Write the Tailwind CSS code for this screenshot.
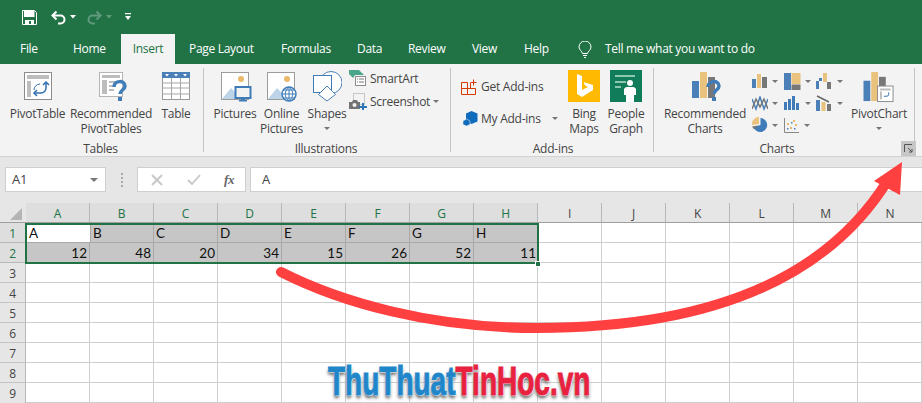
<!DOCTYPE html>
<html lang="en"><head><meta charset="utf-8"><title>Excel Insert ribbon</title>
<script src="https://cdn.jsdelivr.net/npm/@tailwindcss/browser@4"></script></head>
<body class="bg-white">
<div class="relative w-[922px] h-[403px] overflow-hidden font-['Open_Sans',sans-serif] text-[12px] leading-[15px] text-[#444] tracking-[-0.25px]">

<!-- Quick access -->
<div class="h-[34px] bg-[#217346] flex items-center pl-[22px]">
  <svg width="15" height="15" viewBox="0 0 15 15"><path d="M0.500 0.500h12l2 2v12h-14z" fill="none" stroke="#fff"/><rect x="2" y="1" width="10.500" height="6" fill="#fff"/><rect x="3" y="10" width="9" height="4.500" fill="#fff"/><rect x="7" y="11" width="2" height="3" fill="#217346"/></svg>
  <svg class="ml-[14px]" width="15" height="15" viewBox="0 0 15 15"><path d="M1.500 5.500h8a4 4 0 0 1 0 8H7" fill="none" stroke="#fff" stroke-width="2"/><path d="M5.500 1.500l-4 4 4 4" fill="none" stroke="#fff" stroke-width="2"/></svg>
  <svg class="ml-[4px]" width="6" height="4" viewBox="0 0 6 4"><path d="M0 0h6L3 3.500z" fill="#fff"/></svg>
  <svg class="ml-[11px]" width="15" height="15" viewBox="0 0 15 15"><path d="M13.500 5.500h-8a4 4 0 0 0 0 8H8" fill="none" stroke="#5f9a7c" stroke-width="2"/><path d="M9.500 1.500l4 4-4 4" fill="none" stroke="#5f9a7c" stroke-width="2"/></svg>
  <svg class="ml-[4px]" width="6" height="4" viewBox="0 0 6 4"><path d="M0 0h6L3 3.500z" fill="#5f9a7c"/></svg>
  <svg class="ml-[13px]" width="6" height="8" viewBox="0 0 6 8"><path d="M0 0h6v1.200H0zM0 3h6L3 7z" fill="#fff"/></svg>
</div>

<!-- Tabs -->
<div class="h-[30px] bg-[#217346] flex text-white text-[12px] tracking-[-0.3px] leading-[30px]">
  <div class="ml-[20px] w-[53px]">File</div>
  <div class="w-[48px]">Home</div>
  <div class="w-[54px] bg-[#f3f3f3] text-[#217346] text-center">Insert</div>
  <div class="ml-[14px] w-[92px]">Page Layout</div>
  <div class="w-[76px]">Formulas</div>
  <div class="w-[51px]">Data</div>
  <div class="w-[64px]">Review</div>
  <div class="w-[52px]">View</div>
  <div class="w-[54px]">Help</div>
  <svg class="mt-[7px]" width="14" height="17" viewBox="0 0 14 17"><path d="M4.500 12.500C4 10 1 9 1 6a6 6 0 0 1 12 0c0 3-3 4-3.500 6.500zM5 14.500h4M6 16.500h2" fill="none" stroke="#fff"/></svg>
  <div class="ml-[13px]">Tell me what you want to do</div>
</div>

<!-- Ribbon -->
<div class="h-[93px] bg-[#f3f3f3] border-b border-[#d2d2d2] flex pt-[4px] relative">
  <!-- Tables -->
  <div class="w-[204px] h-[84px] border-r border-[#c4c4c4] flex flex-col">
    <div class="h-[73px] shrink-0 flex pl-[5px] pt-[4px]">
      <div class="w-[65px] flex flex-col items-center">
        <svg width="28" height="28" viewBox="0 0 28 28"><rect x="0.500" y="0.500" width="27" height="27" fill="#fff" stroke="#8c8c8c"/><path d="M3 3h22v4H3zM3 9h4v16H3z" fill="#bdbdbd"/><path d="M22 11v5a5 5 0 0 1-5 5h-6" fill="none" stroke="#2f6fb0" stroke-width="1.500"/><path d="M19 13l3-3 3 3M13 18l-3 3 3 3" fill="none" stroke="#2f6fb0" stroke-width="1.500"/><path d="M10 18a6 6 0 0 1 6-6" fill="none" stroke="#2f6fb0"/></svg>
        <div class="mt-[6px]">PivotTable</div>
      </div>
      <div class="w-[82px] flex flex-col items-center">
        <svg class="translate-x-[3px]" width="30" height="30" viewBox="0 0 30 30"><rect x="0.500" y="0.500" width="23" height="24" fill="#fff" stroke="#b5b5b5"/><path d="M3 3h18v3H3zM3 8h5v14H3zM10 9h10v2H10zM10 13h6v2H10zM10 17h5v2H10z" fill="#bdbdbd"/><path d="M15 15c0-7 11-7 11-1 0 4-5 4-5 8" fill="none" stroke="#3f7cb8" stroke-width="3.500"/><rect x="19" y="25" width="4" height="4" fill="#3f7cb8"/></svg>
        <div class="mt-[4px] text-center">Recommended PivotTables</div>
      </div>
      <div class="w-[48px] flex flex-col items-center">
        <svg width="28" height="28" viewBox="0 0 28 28"><rect x="0.500" y="0.500" width="27" height="27" fill="#fff" stroke="#9a9a9a"/><rect width="28" height="6" fill="#4a7fb8"/><path d="M3 2h4L5 4.500zM12 2h4l-2 2.500zM21 2h4l-2 2.500z" fill="#fff"/><path d="M0 11h28M0 16h28M0 22h28M9.500 6v22M18.500 6v22" stroke="#a6a6a6"/></svg>
        <div class="mt-[6px]">Table</div>
      </div>
    </div>
    <div class="text-center h-[15px] shrink-0 pr-[2px]">Tables</div>
  </div>
  <!-- Illustrations -->
  <div class="w-[247px] h-[84px] border-r border-[#c4c4c4] flex flex-col">
    <div class="h-[73px] shrink-0 flex pl-[9px] pt-[4px]">
      <div class="w-[44px] flex flex-col items-center">
        <svg class="translate-x-[1px]" width="31" height="30" viewBox="0 0 31 30"><rect x="0.500" y="0.500" width="27" height="27" fill="#fff" stroke="#9c9c9c"/><circle cx="20" cy="7" r="3" fill="#e9b96c"/><path d="M1 27l9-11 5 5 3-2 4 8z" fill="#bdd3e8"/><rect x="14.500" y="15" width="15" height="11" fill="#f3f3f3" stroke="#3f7cb8" stroke-width="2"/><path d="M20 27h4v1h2v1.500h-8V28h2z" fill="#3f7cb8"/></svg>
        <div class="mt-[4px]">Pictures</div>
      </div>
      <div class="w-[49px] flex flex-col items-center">
        <svg class="translate-x-[1px]" width="31" height="30" viewBox="0 0 31 30"><rect x="0.500" y="0.500" width="27" height="27" fill="#fff" stroke="#9c9c9c"/><circle cx="20" cy="7" r="3" fill="#e9b96c"/><path d="M1 27l9-11 5 5 3-2 4 8z" fill="#bdd3e8"/><circle cx="22" cy="22" r="7" fill="#fff" stroke="#3f7cb8" stroke-width="1.500"/><path d="M15 22h14M22 15v14M16.500 18h11M16.500 26h11M22 15c-5 4-5 10 0 14M22 15c5 4 5 10 0 14" fill="none" stroke="#3f7cb8"/></svg>
        <div class="mt-[4px] text-center">Online Pictures</div>
      </div>
      <div class="w-[42px] flex flex-col items-center">
        <svg class="-translate-x-[1px] -mt-[1px]" width="31" height="31" viewBox="0 0 31 31"><circle cx="20" cy="11.500" r="11" fill="#fff" stroke="#4a80b8"/><rect x="2.500" y="4.500" width="18" height="17" fill="#fff" stroke="#3f7cb8"/><path d="M16 15l8.500 8.500L16 30l-8.500-6.500z" fill="#fff" stroke="#4a80b8"/></svg>
        <div class="mt-[4px]">Shapes</div>
        <svg class="mt-[6px]" width="6" height="3" viewBox="0 0 6 3"><path d="M0 0h6L3 3z" fill="#777"/></svg>
      </div>
      <div class="ml-[1px] flex flex-col gap-[6px] -mt-[2px]">
        <div class="flex items-center gap-[3px] h-[17px]">
          <svg width="18" height="17" viewBox="0 0 18 17"><path d="M0 0h10l5 5H6L4 8 0 4z" fill="#4aa58a"/><rect x="6.500" y="6.500" width="10" height="9" fill="#fff" stroke="#8c8c8c"/><path d="M8 9h1M10 9h5M8 12h1M10 12h5" stroke="#777"/></svg><span>SmartArt</span>
        </div>
        <div class="flex items-center gap-[3px] h-[17px]">
          <svg width="18" height="17" viewBox="0 0 18 17"><rect x="4.500" y="0.500" width="11" height="11" fill="none" stroke="#999" stroke-dasharray="1 1"/><path d="M0 9h3l1-2h4l1 2h2v7H0z" fill="#737373"/><circle cx="5.500" cy="12" r="2" fill="#f3f3f3"/><path d="M13 10h2v3h3v2h-3v2h-2v-2h-3v-2h3z" fill="#2f74b5"/></svg><span>Screenshot</span>
          <svg width="6" height="3" viewBox="0 0 6 3"><path d="M0 0h6L3 3z" fill="#777"/></svg>
        </div>
      </div>
    </div>
    <div class="text-center h-[15px] shrink-0 pr-[2px]">Illustrations</div>
  </div>
  <!-- Add-ins -->
  <div class="w-[203px] h-[84px] border-r border-[#c4c4c4] flex flex-col">
    <div class="h-[73px] shrink-0 flex pl-[10px] pt-[2px]">
      <div class="w-[102px] flex flex-col pt-[8px] gap-[15px]">
        <div class="flex items-center gap-[4px] h-[17px]">
          <svg width="16" height="16" viewBox="0 0 16 16"><path d="M0.500 3.500h6v6h-6zM6.500 9.500h8v6h-8zM0.500 9.500h6v6h-6zM9.500 4v5" fill="none" stroke="#d83b01"/><path d="M9.500 3.500h6M12.500 0.500v6" stroke="#d83b01"/></svg><span>Get Add-ins</span>
        </div>
        <div class="flex items-center h-[17px] pl-[2px]">
          <svg width="15" height="15" viewBox="0 0 15 15"><path d="M8.500 0l6 2.500v8L8.500 13 3 10.500v-8z" fill="#0f6cbd"/><path d="M3.500 8l3.500 2v3.500L3.500 15 0 13.500V10z" fill="#0f6cbd" stroke="#f3f3f3" stroke-width="0.500"/></svg><span class="ml-[3px]">My Add-ins</span>
          <svg class="ml-[11px]" width="6" height="3" viewBox="0 0 6 3"><path d="M0 0h6L3 3z" fill="#777"/></svg>
        </div>
      </div>
      <div class="w-[42px] flex flex-col items-center">
        <div class="w-[32px] h-[32px] bg-[#ffb900] flex items-center justify-center">
          <svg width="19" height="24" viewBox="0 0 19 24"><path d="M2 0l5 2v14l6-3-3-1.500L8.500 8 18 11v5L7 23l-5-3z" fill="#fff"/></svg>
        </div>
        <div class="mt-[4px] text-center">Bing Maps</div>
      </div>
      <div class="w-[42px] flex flex-col items-center">
        <div class="w-[32px] h-[32px] bg-[#107c5a] flex justify-center items-end">
          <svg width="32" height="32" viewBox="0 0 32 32"><path d="M5 5h20v2H5zM5 11h11v2H5zM5 16h6v2H5z" fill="#8fc7b0"/><circle cx="20" cy="13" r="3" fill="#fff"/><path d="M14 19q1-2 3-2h6q2 0 3 2v6h-2v7h-8v-7h-2z" fill="#fff"/></svg>
        </div>
        <div class="mt-[4px] text-center">People Graph</div>
      </div>
    </div>
    <div class="text-center h-[15px] shrink-0 pl-[2px]">Add-ins</div>
  </div>
  <!-- Charts -->
  <div class="w-[261px] h-[84px] border-r border-[#c4c4c4] flex flex-col">
    <div class="h-[73px] shrink-0 flex pl-[9px]">
      <div class="w-[84px] pt-[4px] flex flex-col items-center">
        <svg class="translate-x-[2px]" width="30" height="31" viewBox="0 0 30 31"><rect x="0" y="9" width="7" height="17" fill="#4a7fb8"/><rect x="8" y="0" width="7" height="26" fill="#e9c27d"/><rect x="16" y="5" width="7" height="21" fill="#777"/><path d="M16 15c0-7 11-7 11-1 0 4-5 4-5 8" fill="none" stroke="#3f7cb8" stroke-width="3.500"/><rect x="20" y="25" width="4" height="4" fill="#3f7cb8"/></svg>
        <div class="mt-[3px] text-center">Recommended Charts</div>
      </div>
      <div class="w-[99px] pl-[5px] pt-[2px] grid grid-cols-[32px_32px_33px] grid-rows-[22px_22px_22px]">
        <div class="flex items-center"><svg width="16" height="14" viewBox="0 0 16 14"><rect y="5" width="4" height="9" fill="#4a7fb8"/><rect x="5" width="4" height="14" fill="#e9c27d"/><rect x="10" y="3" width="5" height="11" fill="#777"/></svg><svg class="ml-[4px]" width="6" height="3" viewBox="0 0 6 3"><path d="M0 0h6L3 3z" fill="#777"/></svg></div>
        <div class="flex items-center"><svg width="17" height="17" viewBox="0 0 17 17"><rect width="7" height="17" fill="#4a7fb8"/><rect x="7.500" width="9" height="11" fill="#e9c27d"/><rect x="7.500" y="11.500" width="9" height="5.500" fill="#777"/></svg><svg class="ml-[4px]" width="6" height="3" viewBox="0 0 6 3"><path d="M0 0h6L3 3z" fill="#777"/></svg></div>
        <div class="flex items-center"><svg width="16" height="16" viewBox="0 0 16 16"><path d="M0 8h3V5h3v3H3v8H0z" fill="#4a7fb8"/><rect x="7" y="0" width="4" height="9" fill="#e9c27d"/><rect x="11" y="9" width="4" height="7" fill="#777"/></svg><svg class="ml-[5px]" width="6" height="3" viewBox="0 0 6 3"><path d="M0 0h6L3 3z" fill="#777"/></svg></div>
        <div class="flex items-center"><svg width="16" height="15" viewBox="0 0 16 15"><path d="M0 3l4 10 4-12 4 12 4-10" fill="none" stroke="#4a7fb8" stroke-width="1.500"/><path d="M0 13l4-10 4 8 4-8 4 10" fill="none" stroke="#777" stroke-width="1.500"/></svg><svg class="ml-[4px]" width="6" height="3" viewBox="0 0 6 3"><path d="M0 0h6L3 3z" fill="#777"/></svg></div>
        <div class="flex items-center"><svg width="16" height="14" viewBox="0 0 16 14"><path d="M0 6h3v8H0zM4 3h3v11H4zM8 0h3v14H8zM12 7h3v7h-3z" fill="#3f7cb8"/></svg><svg class="ml-[5px]" width="6" height="3" viewBox="0 0 6 3"><path d="M0 0h6L3 3z" fill="#777"/></svg></div>
        <div class="flex items-center"><svg width="16" height="16" viewBox="0 0 16 16"><rect y="5" width="4" height="11" fill="#4a7fb8"/><rect x="5.500" y="7" width="4" height="9" fill="#e9c27d"/><rect x="11" y="9" width="4" height="7" fill="#777"/><path d="M1 1l6 3 6 3" fill="none" stroke="#666" stroke-width="1.500"/></svg><svg class="ml-[5px]" width="6" height="3" viewBox="0 0 6 3"><path d="M0 0h6L3 3z" fill="#777"/></svg></div>
        <div class="flex items-center"><svg width="16" height="16" viewBox="0 0 16 16"><path d="M8.500 1a7 7 0 1 1-7 9l7-2z" fill="#3f7cb8"/><path d="M7 0v7L0 8a7 7 0 0 1 7-8z" fill="#e9c27d"/><path d="M0 9.500l6-1-4 4z" fill="#777"/></svg><svg class="ml-[4px]" width="6" height="3" viewBox="0 0 6 3"><path d="M0 0h6L3 3z" fill="#777"/></svg></div>
        <div class="flex items-center"><svg width="15" height="15" viewBox="0 0 15 15"><path d="M0.500 0v14.500H15" fill="none" stroke="#888"/><path d="M3 5h2v2H3zM9 2h2v2H9zM11 6h2v2h-2zM6 9h2v2H6z" fill="#e9b96c"/><path d="M7 4h1.500v1.500H7zM3 10h1.500v1.500H3zM10 10h1.500v1.500H10z" fill="#4a7fb8"/></svg><svg class="ml-[5px]" width="6" height="3" viewBox="0 0 6 3"><path d="M0 0h6L3 3z" fill="#777"/></svg></div>
      </div>
      <div class="w-[66px] pt-[4px] flex flex-col items-center">
        <svg width="32" height="31" viewBox="0 0 32 32"><rect x="0" y="9" width="7" height="21" fill="#4a7fb8"/><rect x="8" y="0" width="7" height="30" fill="#e9c27d"/><rect x="16" y="5" width="7" height="14" fill="#777"/><rect x="14.500" y="14.500" width="16" height="16" fill="#fff" stroke="#8c8c8c"/><path d="M17 17h11v2H17zM17 20h2v8h-2z" fill="#bdbdbd"/><path d="M26 21v2a2 2 0 0 1-2 2h-3" fill="none" stroke="#2f6fb0"/></svg>
        <div class="mt-[3px]">PivotChart</div>
        <svg class="mt-[6px]" width="6" height="3" viewBox="0 0 6 3"><path d="M0 0h6L3 3z" fill="#777"/></svg>
      </div>
    </div>
    <div class="text-center h-[15px] shrink-0 pr-[14px]">Charts</div>
  </div>
  <div class="absolute left-[901px] top-[77px] w-[15px] h-[15px] bg-[#c6c6c6] flex items-center justify-center">
    <svg width="9" height="9" viewBox="0 0 9 9"><path d="M0.500 8V0.500H8M4 4l4 4M8 5v3H5" fill="none" stroke="#555"/></svg>
  </div>
</div>

<!-- Formula bar -->
<div class="h-[66px] bg-[#e6e6e6] relative">
  <div class="flex pt-[10px] gap-[4px] h-[35px] text-[13px]">
    <div class="ml-[5px] w-[101px] h-[25px] bg-white border border-[#cfcfcf] flex items-center justify-between pl-[6px] pr-[7px]">A1<svg width="8" height="4" viewBox="0 0 8 4"><path d="M0 0h8L4 4z" fill="#777"/></svg></div>
    <div class="w-[23px] flex items-center justify-center gap-[2px] flex-col"><i class="block w-[2px] h-[2px] bg-[#aaa]"></i><i class="block w-[2px] h-[2px] bg-[#aaa]"></i><i class="block w-[2px] h-[2px] bg-[#aaa]"></i><i class="block w-[2px] h-[2px] bg-[#aaa]"></i></div>
    <div class="w-[109px] h-[25px] bg-white border border-[#cfcfcf] flex items-center pl-[13px]">
      <svg width="12" height="12" viewBox="0 0 12 12"><path d="M1 1l10 10M11 1L1 11" stroke="#c6c6c6" stroke-width="1.800"/></svg>
      <svg class="ml-[24px]" width="14" height="12" viewBox="0 0 14 12"><path d="M1 6l4 4 8-9" fill="none" stroke="#c6c6c6" stroke-width="1.800"/></svg>
      <span class="ml-[23px] font-['Liberation_Serif',serif] italic font-bold text-[#666] text-[13px]">fx</span>
    </div>
    <div class="flex-1 h-[25px] bg-white border-y border-l border-[#cfcfcf] flex items-center pl-[11px]">A</div>
  </div>
  <!-- Column headers -->
  <div class="absolute top-[46px] left-0 right-0 h-[20px] flex border-b border-[#9f9f9f] text-center leading-[22px]">
    <div class="w-[26px] relative"><svg class="absolute left-[10px] top-[5px]" width="12" height="12" viewBox="0 0 12 12"><path d="M12 0v12H0z" fill="#b4b4b4"/></svg></div>
    <div class="w-[64px] border-r border-[#b8b8b8] bg-[#dedede] text-[#217346]">A</div>
    <div class="w-[64px] border-r border-[#b8b8b8] bg-[#dedede] text-[#217346]">B</div>
    <div class="w-[64px] border-r border-[#b8b8b8] bg-[#dedede] text-[#217346]">C</div>
    <div class="w-[64px] border-r border-[#b8b8b8] bg-[#dedede] text-[#217346]">D</div>
    <div class="w-[64px] border-r border-[#b8b8b8] bg-[#dedede] text-[#217346]">E</div>
    <div class="w-[64px] border-r border-[#b8b8b8] bg-[#dedede] text-[#217346]">F</div>
    <div class="w-[64px] border-r border-[#b8b8b8] bg-[#dedede] text-[#217346]">G</div>
    <div class="w-[64px] border-r border-[#b8b8b8] bg-[#dedede] text-[#217346]">H</div>
    <div class="w-[64px] border-r border-[#b8b8b8]">I</div>
    <div class="w-[64px] border-r border-[#b8b8b8]">J</div>
    <div class="w-[64px] border-r border-[#b8b8b8]">K</div>
    <div class="w-[64px] border-r border-[#b8b8b8]">L</div>
    <div class="w-[64px] border-r border-[#b8b8b8]">M</div>
    <div class="flex-1">N</div>
  </div>
</div>

<!-- Sheet -->
<div class="flex h-[181px]">
  <div class="w-[26px] bg-[#e6e6e6] border-r border-[#b8b8b8] text-center leading-[22px]">
    <div class="h-[20px] border-b border-[#b8b8b8] bg-[#dedede] text-[#217346]">1</div>
    <div class="h-[20px] border-b border-[#b8b8b8] bg-[#dedede] text-[#217346]">2</div>
    <div class="h-[20px] border-b border-[#c4c4c4]">3</div>
    <div class="h-[20px] border-b border-[#c4c4c4]">4</div>
    <div class="h-[20px] border-b border-[#c4c4c4]">5</div>
    <div class="h-[20px] border-b border-[#c4c4c4]">6</div>
    <div class="h-[20px] border-b border-[#c4c4c4]">7</div>
    <div class="h-[20px] border-b border-[#c4c4c4]">8</div>
    <div class="h-[20px]">9</div>
  </div>
  <div class="relative flex-1 font-['Lato',sans-serif] text-[13.500px] leading-[21px] text-[#111] tracking-normal bg-[linear-gradient(to_right,#cfcfcf_1px,transparent_1px),linear-gradient(to_bottom,transparent_19px,#cfcfcf_19px)] bg-[size:64px_20px] bg-[position:63px_0]">
    <div class="grid grid-cols-[repeat(8,64px)] grid-rows-[20px_20px] bg-[#c6c6c6] w-[512px]">
      <div class="bg-white border-b border-[#a8a8a8] pl-[3px]">A</div>
      <div class="border-x border-b border-[#a8a8a8] pl-[2px]">B</div>
      <div class="border-r border-b border-[#a8a8a8] pl-[2px]">C</div>
      <div class="border-r border-b border-[#a8a8a8] pl-[2px]">D</div>
      <div class="border-r border-b border-[#a8a8a8] pl-[2px]">E</div>
      <div class="border-r border-b border-[#a8a8a8] pl-[2px]">F</div>
      <div class="border-r border-b border-[#a8a8a8] pl-[2px]">G</div>
      <div class="border-b border-[#a8a8a8] pl-[2px]">H</div>
      <div class="border-r border-[#a8a8a8] text-right pr-[2px]">12</div>
      <div class="border-r border-[#a8a8a8] text-right pr-[2px]">48</div>
      <div class="border-r border-[#a8a8a8] text-right pr-[2px]">20</div>
      <div class="border-r border-[#a8a8a8] text-right pr-[2px]">34</div>
      <div class="border-r border-[#a8a8a8] text-right pr-[2px]">15</div>
      <div class="border-r border-[#a8a8a8] text-right pr-[2px]">26</div>
      <div class="border-r border-[#a8a8a8] text-right pr-[2px]">52</div>
      <div class="text-right pr-[2px]">11</div>
    </div>
    <div class="absolute -left-[1px] top-0 w-[514px] h-[41px] border-2 border-[#217346]"></div>
    <div class="absolute left-[509px] top-[38px] w-[6px] h-[6px] bg-[#217346] border border-white"></div>
  </div>
</div>

<!-- Annotation arrow -->
<svg class="absolute inset-0 pointer-events-none" width="922" height="403" viewBox="0 0 922 403"><path d="M281 272C340 302 430 328 537 328C690 328 820 290 888 180" fill="none" stroke="#ff4040" stroke-width="10" stroke-linecap="round"/><path d="M902 162L874 181L900 195z" fill="#ff4040"/></svg>

<!-- Watermark -->
<div class="absolute left-[328px] top-[358px] origin-left scale-x-[.7] whitespace-nowrap font-['Liberation_Sans',sans-serif] font-bold text-[40px] leading-[46px] tracking-normal [-webkit-text-stroke:1px_currentColor] [text-shadow:0_0_2px_#fff,1px_1px_1px_#fff,0_3px_4px_#555]"><span class="text-[#1f87c9]">ThuThuat</span><span class="text-[#e8213f]">TinHoc.vn</span></div>
</div>
</body></html>
